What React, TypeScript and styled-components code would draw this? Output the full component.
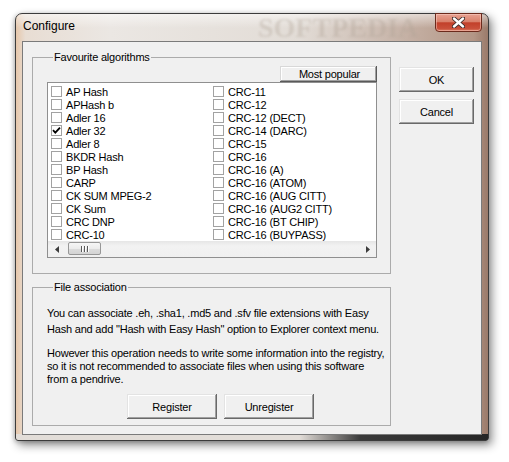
import React from 'react';
import styled, { createGlobalStyle } from 'styled-components';

const GlobalStyle = createGlobalStyle`
    body {
        margin: 0;
        background: #ffffff;
        font-family: 'Liberation Sans', Arial, sans-serif;
    }
`;

const leftColumn = [
    'AP Hash',
    'APHash b',
    'Adler 16',
    'Adler 32',
    'Adler 8',
    'BKDR Hash',
    'BP Hash',
    'CARP',
    'CK SUM MPEG-2',
    'CK Sum',
    'CRC DNP',
    'CRC-10',
];

const rightColumn = [
    'CRC-11',
    'CRC-12',
    'CRC-12 (DECT)',
    'CRC-14 (DARC)',
    'CRC-15',
    'CRC-16',
    'CRC-16 (A)',
    'CRC-16 (ATOM)',
    'CRC-16 (AUG CITT)',
    'CRC-16 (AUG2 CITT)',
    'CRC-16 (BT CHIP)',
    'CRC-16 (BUYPASS)',
];

const checked = ['Adler 32'];

export default function App() {
    const algorithms = [...leftColumn, ...rightColumn];

    return (
        <>
            <GlobalStyle />
            <Page>
                <Window>
                    <TitleBar>
                        <Title>Configure</Title>
                        <Watermark>SOFTPEDIA</Watermark>
                        <CloseButton>
                            <svg width="13" height="11" viewBox="0 0 13 11">
                                <path
                                    d="M2 1.5 L11 9.5 M11 1.5 L2 9.5"
                                    stroke="#3a2a28"
                                    strokeWidth="4.2"
                                    strokeLinecap="round"
                                />
                                <path
                                    d="M2 1.5 L11 9.5 M11 1.5 L2 9.5"
                                    stroke="#ffffff"
                                    strokeWidth="2.4"
                                    strokeLinecap="round"
                                />
                            </svg>
                        </CloseButton>
                    </TitleBar>

                    <Client>
                        <LeftColumn>
                            <GroupBox $height={223}>
                                <Legend>Favourite algorithms</Legend>
                                <GroupInner>
                                    <PopularButton>Most popular</PopularButton>
                                    <ListBox>
                                        <Items>
                                            {algorithms.map((name) => (
                                                <Item key={name}>
                                                    <CheckBox>
                                                        {checked.includes(name) && (
                                                            <svg width="9" height="9" viewBox="0 0 9 9">
                                                                <path
                                                                    d="M1 4.2 L3.3 6.6 L8 1.6"
                                                                    fill="none"
                                                                    stroke="#000"
                                                                    strokeWidth="1.8"
                                                                />
                                                            </svg>
                                                        )}
                                                    </CheckBox>
                                                    {name}
                                                </Item>
                                            ))}
                                        </Items>
                                        <ScrollBar>
                                            <ArrowButton>
                                                <svg width="4" height="7" viewBox="0 0 4 7">
                                                    <polygon points="4,0 0,3.5 4,7" fill="#3c3c3c" />
                                                </svg>
                                            </ArrowButton>
                                            <Thumb>
                                                <Grip />
                                                <Grip />
                                                <Grip />
                                            </Thumb>
                                            <Track />
                                            <ArrowButton>
                                                <svg width="4" height="7" viewBox="0 0 4 7">
                                                    <polygon points="0,0 4,3.5 0,7" fill="#3c3c3c" />
                                                </svg>
                                            </ArrowButton>
                                        </ScrollBar>
                                    </ListBox>
                                </GroupInner>
                            </GroupBox>

                            <GroupBox $grow>
                                <Legend>File association</Legend>
                                <GroupInner>
                                    <FirstText>
                                        You can associate .eh, .sha1, .md5 and .sfv file extensions with Easy
                                        <br />
                                        Hash and add "Hash with Easy Hash" option to Explorer context menu.
                                    </FirstText>
                                    <SecondText>
                                        However this operation needs to write some information into the registry,
                                        <br />
                                        so it is not recommended to associate files when using this software
                                        <br />
                                        from a pendrive.
                                    </SecondText>
                                    <ButtonRow>
                                        <Button $width={90}>Register</Button>
                                        <Button $width={90}>Unregister</Button>
                                    </ButtonRow>
                                </GroupInner>
                            </GroupBox>
                        </LeftColumn>

                        <RightColumn>
                            <Button $width={75}>OK</Button>
                            <Button $width={75}>Cancel</Button>
                        </RightColumn>
                    </Client>
                </Window>
            </Page>
        </>
    );
}

const Page = styled.div`
    width: 509px;
    height: 462px;
    box-sizing: border-box;
    padding: 13px 0 0 15px;
    overflow: hidden;
`;

const Window = styled.div`
    width: 474px;
    height: 428px;
    box-sizing: border-box;
    display: flex;
    flex-direction: column;
    padding: 0 6px 5px;
    border: 1px solid #3c3c3c;
    border-radius: 7px 7px 3px 3px;
    background:
        linear-gradient(to bottom, rgba(255, 255, 255, 0.55) 0px, rgba(255, 255, 255, 0) 14px),
        linear-gradient(to right, #e2ddd8 0%, #e2ddd8 60%, #3a3a3a 73%, #262626 100%) bottom / 100% 6px no-repeat,
        linear-gradient(to right, #e6c7ab 0%, #e8ddd3 2%, #ebe7e3 20%, #e2dcd6 60%, #b39686 97%, #9a7a6a 100%);
    box-shadow:
        3px 4px 10px rgba(0, 0, 0, 0.45),
        -1px 1px 4px rgba(0, 0, 0, 0.2);
`;

const TitleBar = styled.div`
    position: relative;
    height: 27px;
    display: flex;
    align-items: flex-start;
`;

const Title = styled.div`
    padding-left: 1px;
    line-height: 25px;
    font-size: 12px;
    color: #000000;
`;

const Watermark = styled.div`
    position: absolute;
    left: 236px;
    top: 0;
    font-family: 'Liberation Serif', 'Times New Roman', serif;
    font-weight: bold;
    font-size: 28px;
    line-height: 28px;
    color: rgba(175, 162, 150, 0.32);
    filter: blur(1.2px);
    pointer-events: none;
`;

const CloseButton = styled.div`
    position: relative;
    margin-left: auto;
    margin-top: -1px;
    width: 47px;
    height: 19px;
    box-sizing: border-box;
    display: flex;
    justify-content: center;
    align-items: center;
    border: 1px solid #6b2a1c;
    border-radius: 0 0 4px 4px;
    background: linear-gradient(to bottom, #e8a292 0%, #d9806a 45%, #c2402a 52%, #c9503a 85%, #dc7c62 100%);
    box-shadow: inset 0 0 0 1px rgba(255, 220, 210, 0.45);
`;

const Client = styled.div`
    flex: 1;
    display: flex;
    gap: 8px;
    padding: 9px 7px 8px 9px;
    border: 1px solid #7a7a7a;
    background: #f0f0f0;
`;

const LeftColumn = styled.div`
    width: 359px;
    display: flex;
    flex-direction: column;
    gap: 7px;
`;

const RightColumn = styled.div`
    width: 75px;
    display: flex;
    flex-direction: column;
    gap: 7px;
    padding-top: 16px;
`;

const GroupBox = styled.fieldset<{ $height?: number; $grow?: boolean }>`
    margin: 0;
    min-width: 0;
    box-sizing: border-box;
    height: ${(p) => (p.$height ? `${p.$height}px` : 'auto')};
    flex: ${(p) => (p.$grow ? 1 : 'none')};
    padding: 0 13px 0 14px;
    border: 1px solid #ababab;
`;

const Legend = styled.legend`
    margin-left: 6px;
    padding: 0 1px;
    font-size: 11px;
    letter-spacing: -0.2px;
    line-height: 13px;
    color: #000000;
`;

const GroupInner = styled.div`
    display: flex;
    flex-direction: column;
    padding-top: 2px;
    font-size: 11px;
    letter-spacing: -0.2px;
    color: #000000;
`;

const PopularButton = styled.div`
    align-self: flex-end;
    width: 97px;
    height: 16px;
    box-sizing: border-box;
    display: flex;
    justify-content: center;
    align-items: center;
    padding-left: 2px;
    background: #f0f0f0;
    box-shadow:
        inset -1px -1px #5a5a5a,
        inset 1px 1px #d8d8d8,
        inset -2px -2px #a0a0a0,
        inset 2px 2px #ffffff;
`;

const ListBox = styled.div`
    height: 176px;
    box-sizing: border-box;
    display: flex;
    flex-direction: column;
    border: 1px solid #8f8f8f;
    background: #ffffff;
`;

const Items = styled.div`
    flex: 1;
    display: grid;
    grid-auto-flow: column;
    grid-template-rows: repeat(12, 13px);
    grid-auto-columns: 162px;
    padding: 2px 0 0 3px;
    overflow: hidden;
`;

const Item = styled.div`
    display: flex;
    align-items: center;
    height: 13px;
    white-space: nowrap;
`;

const CheckBox = styled.div`
    width: 11px;
    height: 11px;
    box-sizing: border-box;
    margin-right: 4px;
    display: flex;
    justify-content: center;
    align-items: center;
    border: 1px solid #a2a2a2;
    background: #ffffff;
`;

const ScrollBar = styled.div`
    height: 16px;
    display: flex;
    background: linear-gradient(to bottom, #e6e6e6 0%, #f2f2f2 30%, #f0f0f0 100%);
`;

const ArrowButton = styled.div`
    width: 17px;
    display: flex;
    justify-content: center;
    align-items: center;
`;

const Thumb = styled.div`
    width: 33px;
    height: 13px;
    margin: 1px 0 0 3px;
    box-sizing: border-box;
    display: flex;
    justify-content: center;
    align-items: center;
    gap: 2px;
    border: 1px solid #979797;
    border-radius: 2px;
    background: linear-gradient(to bottom, #f6f6f6 0%, #ececec 50%, #dcdcdc 51%, #d4d4d4 100%);
`;

const Grip = styled.div`
    width: 1px;
    height: 6px;
    background: #5a5a5a;
    box-shadow: 1px 0 #ffffff;
`;

const Track = styled.div`
    flex: 1;
`;

const FirstText = styled.div`
    margin-top: 9px;
    line-height: 16px;
    white-space: nowrap;
`;

const SecondText = styled.div`
    margin-top: 10px;
    line-height: 13px;
    white-space: nowrap;
`;

const ButtonRow = styled.div`
    display: flex;
    gap: 7px;
    margin-top: 8px;
    padding-left: 80px;
`;

const Button = styled.div<{ $width: number }>`
    width: ${(p) => p.$width}px;
    height: 25px;
    box-sizing: border-box;
    display: flex;
    justify-content: center;
    align-items: center;
    font-size: 11px;
    letter-spacing: -0.2px;
    color: #000000;
    background: #f0f0f0;
    box-shadow:
        inset -1px -1px #696969,
        inset 1px 1px #e3e3e3,
        inset -2px -2px #a0a0a0,
        inset 2px 2px #ffffff;
`;
